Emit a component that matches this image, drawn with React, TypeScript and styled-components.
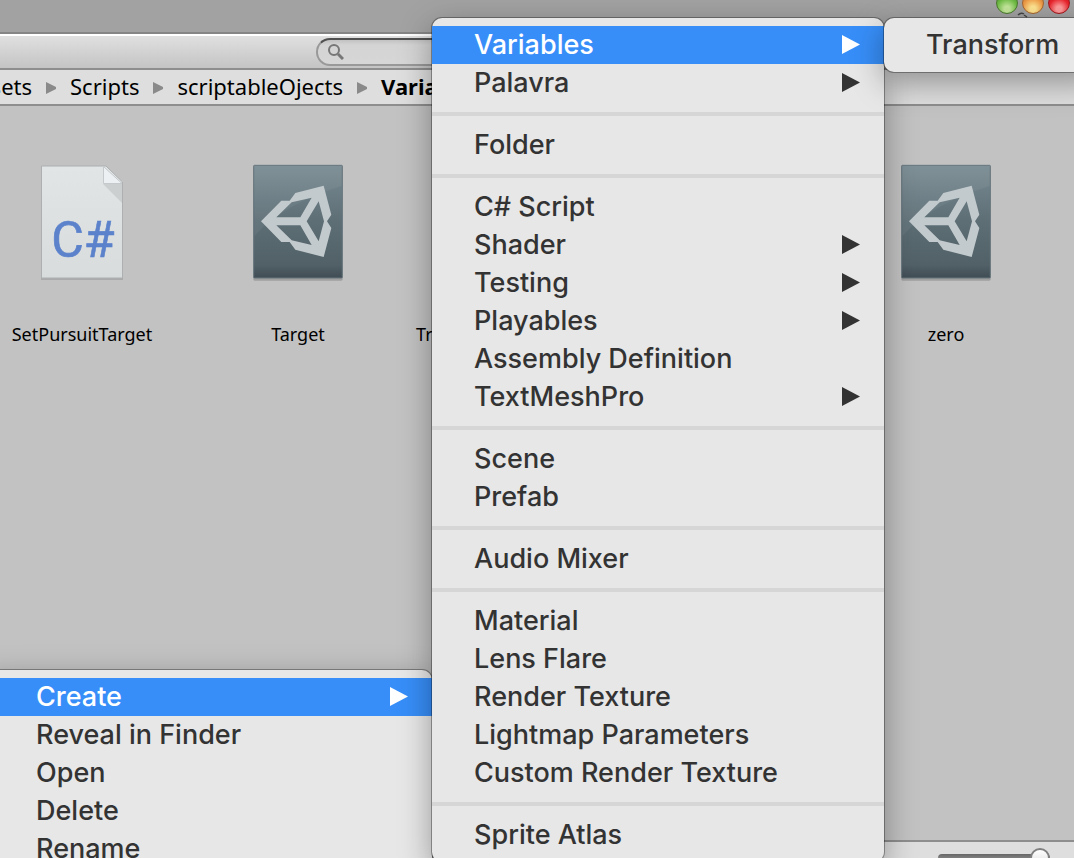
import React from 'react';
import styled, { createGlobalStyle } from 'styled-components';

const Global = createGlobalStyle`
  * { box-sizing: border-box; }
  html, body { margin: 0; height: 100%; overflow: hidden; }
  button, input { font: inherit; }
`;

const Window = styled.div`
  position: relative;
  display: flex;
  flex-direction: column;
  height: 100vh;
  overflow: hidden;
  background: #c2c2c2;
  color: #000;
  font-family: 'Noto Sans', 'Open Sans', sans-serif;
`;

const TitleBar = styled.header`
  display: flex;
  justify-content: flex-end;
  align-items: flex-end;
  gap: 4px;
  height: 32px;
  padding: 0 4px 18px 0;
  background: #a2a2a2;
`;

const Light = styled.button<{ $edge: string; $mid: string; $glow: string }>`
  flex: none;
  width: 22px;
  height: 22px;
  padding: 0;
  border: 1px solid ${p => p.$edge};
  border-radius: 50%;
  background: radial-gradient(circle at 50% 80%, ${p => p.$glow} 15%, ${p => p.$mid} 55%, ${p => p.$edge} 100%);
`;

const Pointer = styled.svg`
  position: absolute;
  top: 11px;
  right: 45px;
`;

const Toolbar = styled.div`
  display: flex;
  height: 38px;
  padding: 2px 12px 0 316px;
  border-top: 2px solid #858585;
  border-bottom: 2px solid #8e8e8e;
  background: linear-gradient(#fff 2px, #e0e0e0 2px, #c4c4c4);
`;

const Search = styled.label`
  display: flex;
  align-items: center;
  flex: 1;
  gap: 6px;
  height: 28px;
  margin-top: 2px;
  padding-left: 10px;
  border: 2px solid #999;
  border-top-color: #505050;
  border-radius: 14px;
  background: linear-gradient(#c2c2c2, #d4d4d4 5px, #d6d6d6);
`;

const SearchInput = styled.input`
  flex: 1;
  min-width: 0;
  border: 0;
  outline: 0;
  background: transparent;
  font-size: 18px;
`;

const Crumbs = styled.nav`
  display: flex;
  align-items: center;
  gap: 13px;
  height: 36px;
  margin-left: -34px;
  border-bottom: 2px solid #8e8e8e;
  background: #dedede;
  font-size: 22px;
  line-height: 32px;
  padding-bottom: 2px;
`;

const Crumb = styled.a<{ $current?: boolean }>`
  color: #000;
  text-decoration: none;
  font-weight: ${p => (p.$current ? 700 : 400)};
`;

const Arrow = styled.svg`
  flex: none;
  margin-top: 4px;
`;

const Assets = styled.main`
  display: grid;
  grid-template-columns: repeat(5, 216px);
  align-content: start;
  flex: 1;
  min-height: 0;
  margin-left: -26px;
  padding-top: 58px;
`;

const Asset = styled.figure<{ $column: number }>`
  display: flex;
  grid-column: ${p => p.$column};
  flex-direction: column;
  align-items: center;
  gap: 40px;
  margin: 0;
`;

const AssetName = styled.figcaption`
  font-size: 18px;
  line-height: 24px;
`;

const Footer = styled.footer`
  display: flex;
  justify-content: flex-end;
  align-items: flex-start;
  height: 18px;
  padding: 6px 24px 0 0;
  border-top: 2px solid #8e8e8e;
  background: #dedede;
`;

const ZoomSlider = styled.input`
  appearance: none;
  width: 112px;
  height: 20px;
  margin: 0;
  background: transparent;
  &::-webkit-slider-runnable-track {
    height: 8px;
    border-radius: 4px;
    background: linear-gradient(#666, #999);
  }
  &::-webkit-slider-thumb {
    appearance: none;
    width: 20px;
    height: 20px;
    margin-top: -6px;
    border: 2px solid #808080;
    border-radius: 50%;
    background: linear-gradient(#fff, #ddd);
  }
`;

const Menu = styled.ul`
  position: absolute;
  margin: 0;
  padding: 8px 0;
  list-style: none;
  background: #e7e7e7;
  border-radius: 10px;
  box-shadow: 0 0 0 1px rgba(0, 0, 0, 0.32), 0 10px 32px rgba(0, 0, 0, 0.36);
  color: #333;
  font-family: Inter, 'Liberation Sans', sans-serif;
  font-weight: 450;
`;

const ContextMenu = styled(Menu)`
  top: 670px;
  left: -20px;
  width: 452px;
`;

const CreateMenu = styled(Menu)`
  top: 18px;
  left: 432px;
  width: 452px;
`;

const VariablesMenu = styled(Menu)`
  top: 18px;
  left: 884px;
  width: 216px;
`;

const MenuButton = styled.button<{ $active?: boolean; $inset: number }>`
  display: flex;
  align-items: center;
  justify-content: space-between;
  width: 100%;
  height: 38px;
  padding: 0 24px 0 ${p => p.$inset}px;
  border: 0;
  background: ${p => (p.$active ? '#378ef8' : 'transparent')};
  color: ${p => (p.$active ? '#fff' : 'inherit')};
  font-size: 27px;
  line-height: 38px;
  text-align: left;
  white-space: nowrap;
`;

const Separator = styled.li`
  height: 4px;
  margin: 10px 0;
  background: #d6d6d6;
`;

type Entry = { label: string; sub?: boolean; active?: boolean } | null;

const e = (label: string, sub = false, active = false): Entry => ({ label, sub, active });

const createEntries: Entry[] = [
  e('Variables', true, true), e('Palavra', true), null,
  e('Folder'), null,
  e('C# Script'), e('Shader', true), e('Testing', true), e('Playables', true),
  e('Assembly Definition'), e('TextMeshPro', true), null,
  e('Scene'), e('Prefab'), null,
  e('Audio Mixer'), null,
  e('Material'), e('Lens Flare'), e('Render Texture'), e('Lightmap Parameters'), e('Custom Render Texture'), null,
  e('Sprite Atlas'),
];

const contextEntries: Entry[] = [
  e('Create', true, true), e('Reveal in Finder'), e('Open'), e('Delete'), e('Rename'),
];

const Entries = ({ items, inset }: { items: Entry[]; inset: number }) => (
  <>
    {items.map((item, i) =>
      item ? (
        <li key={i}>
          <MenuButton type="button" $active={item.active} $inset={inset}>
            {item.label}
            {item.sub && (
              <svg width="18" height="20" viewBox="0 0 18 20" aria-hidden="true">
                <path d="M0 0 18 9.500 0 19Z" fill="currentColor" />
              </svg>
            )}
          </MenuButton>
        </li>
      ) : (
        <Separator key={i} role="separator" />
      ),
    )}
  </>
);

const CrumbArrow = () => (
  <Arrow width="12" height="12" viewBox="0 0 12 12" aria-hidden="true">
    <path d="M1 0 11 5V7L1 12Z" fill="#8a8a8a" />
  </Arrow>
);

const ScriptIcon = () => (
  <svg width="90" height="118" viewBox="0 0 90 118" aria-hidden="true">
    <defs>
      <linearGradient id="paper" x2="0" y2="1">
        <stop stopColor="#e1e5e6" />
        <stop offset="1" stopColor="#d9dcdd" />
      </linearGradient>
    </defs>
    <path d="M4 4H69L86 20V116H4Z" fill="#000" opacity=".12" />
    <path d="M4.500 2H69L85.500 18V114H4.500Z" fill="url(#paper)" stroke="#acb0b1" />
    <path d="M66 20 85 39V18Z" fill="#cbcfd0" />
    <path d="M66.500 2.500V19.500H85Z" fill="#edf0f2" stroke="#c5c9cb" />
    <text x="46" y="93" textAnchor="middle" fontFamily="Roboto, sans-serif" fontSize="50" fill="#5b82cb" stroke="#5b82cb" strokeWidth=".6">C#</text>
  </svg>
);

const UnityIcon = () => (
  <svg width="90" height="118" viewBox="0 0 270 354" aria-hidden="true">
    <defs>
      <linearGradient id="slate" x2="0" y2="1">
        <stop stopColor="#798b93" />
        <stop offset=".5" stopColor="#5d6e75" />
        <stop offset=".88" stopColor="#526168" />
        <stop offset="1" stopColor="#404c54" />
      </linearGradient>
    </defs>
    <rect x="1" y="10" width="268" height="340" rx="4" fill="#000" opacity=".18" />
    <rect x="2" y="4" width="266" height="338" rx="2" fill="url(#slate)" stroke="#68767d" strokeWidth="3" />
    <path d="M4 6H266V66Q90 120 4 216Z" fill="#fff" opacity=".05" />
    <path
      fillRule="evenodd"
      fill="#c2cacd"
      d="M24 172 85 110H110L127 87 212 65 235 152 222 172 235 192 212 279 127 257 110 234H85ZM70 160H142L176 101 116 115ZM70 184 116 229 176 243 142 184ZM161 172 197 232 213 172 197 112Z"
    />
  </svg>
);

const assets = [
  { name: 'SetPursuitTarget', column: 1, icon: <ScriptIcon /> },
  { name: 'Target', column: 2, icon: <UnityIcon /> },
  { name: 'TransformVariableData', column: 3, icon: <UnityIcon /> },
  { name: 'zero', column: 5, icon: <UnityIcon /> },
];

export default function App() {
  return (
    <Window>
      <Global />
      <TitleBar>
        <Light type="button" aria-label="Zoom" $edge="#4b7a2e" $mid="#6dbb43" $glow="#c3e79a" />
        <Light type="button" aria-label="Minimize" $edge="#a8662c" $mid="#ee9a45" $glow="#ffe490" />
        <Light type="button" aria-label="Close" $edge="#a3161c" $mid="#e8242c" $glow="#ff9b9b" />
        <Pointer width="12" height="8" viewBox="0 0 12 8" fill="none" stroke="#444" strokeWidth="1.500" aria-hidden="true">
          <path d="M1 4Q4 1 7 3M7 4 10 6" />
        </Pointer>
      </TitleBar>
      <Toolbar>
        <Search>
          <svg width="16" height="16" viewBox="0 0 16 16" fill="none" stroke="#777" aria-hidden="true">
            <circle cx="6" cy="6" r="5" strokeWidth="2" />
            <path d="M10 10 15 15" strokeWidth="3" />
          </svg>
          <SearchInput type="text" aria-label="Search assets" />
        </Search>
      </Toolbar>
      <Crumbs aria-label="Folder path">
        <Crumb href="#assets">Assets</Crumb>
        <CrumbArrow />
        <Crumb href="#scripts">Scripts</Crumb>
        <CrumbArrow />
        <Crumb href="#objects">scriptableOjects</Crumb>
        <CrumbArrow />
        <Crumb href="#variables" $current>Variables</Crumb>
      </Crumbs>
      <Assets>
        {assets.map(a => (
          <Asset key={a.name} $column={a.column}>
            {a.icon}
            <AssetName>{a.name}</AssetName>
          </Asset>
        ))}
      </Assets>
      <Footer>
        <ZoomSlider type="range" aria-label="Icon size" min={0} max={100} defaultValue={100} />
      </Footer>
      <ContextMenu>
        <Entries items={contextEntries} inset={56} />
      </ContextMenu>
      <CreateMenu>
        <Entries items={createEntries} inset={42} />
      </CreateMenu>
      <VariablesMenu>
        <Entries items={[e('Transform')]} inset={42} />
      </VariablesMenu>
    </Window>
  );
}
